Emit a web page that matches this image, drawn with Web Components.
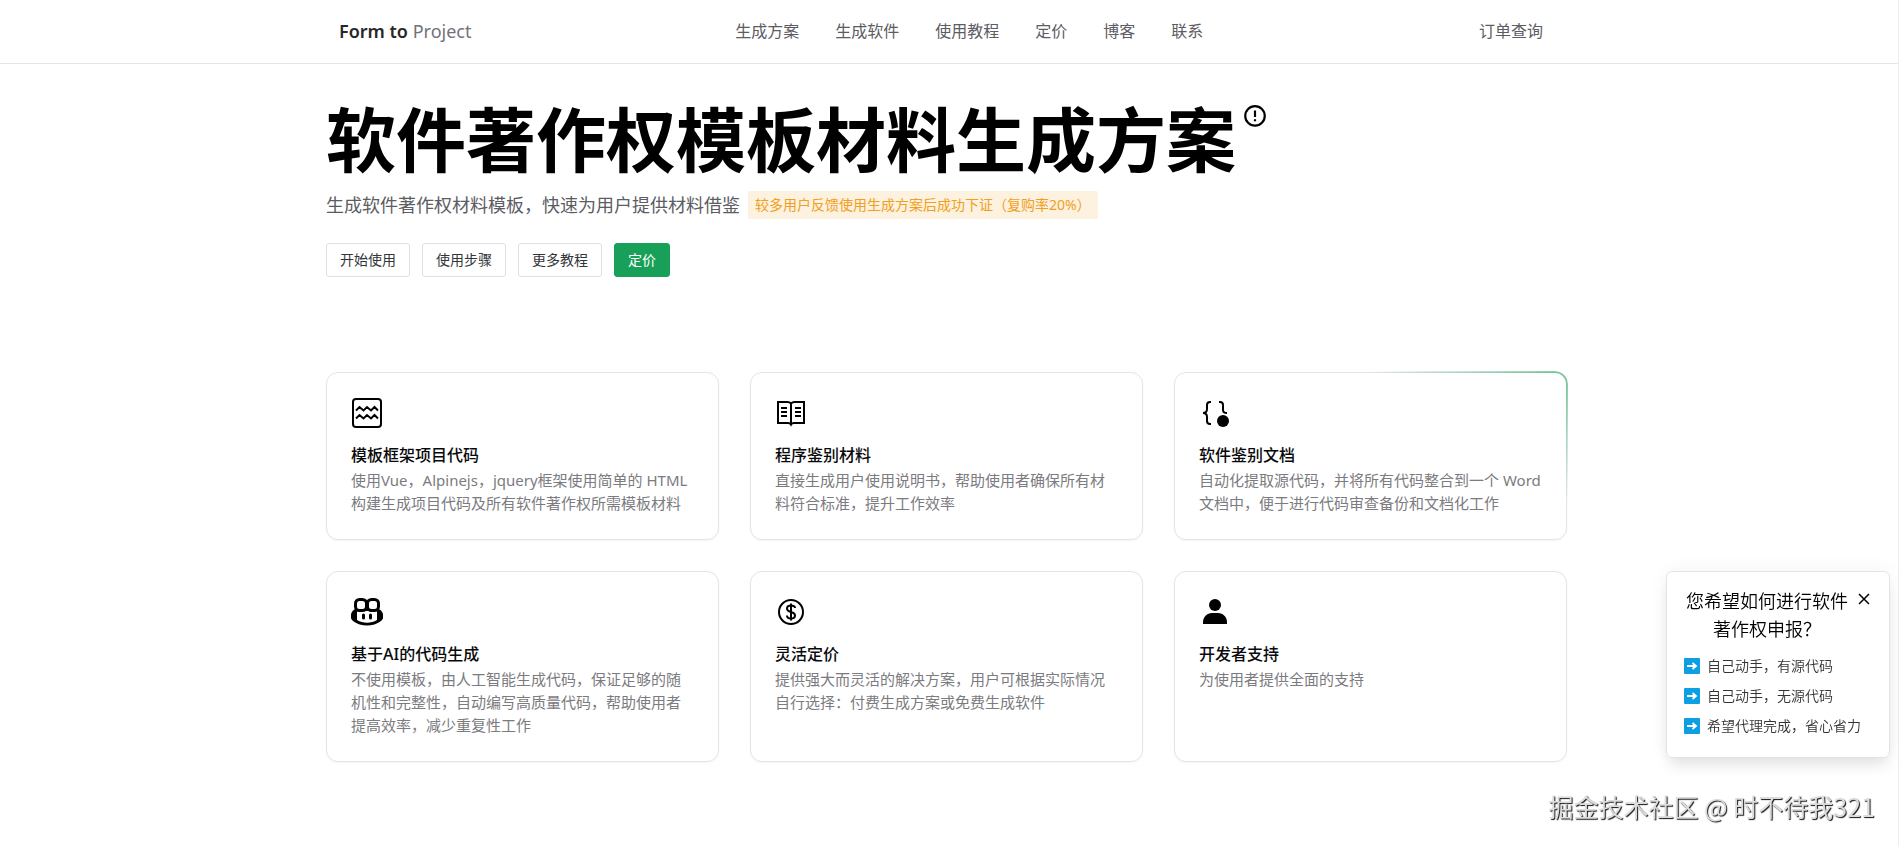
<!DOCTYPE html>
<html lang="zh-CN">
<head>
<meta charset="utf-8">
<title>Form to Project</title>
<style>
    body {
        margin: 0;
        background: #fff;
        color: #000;
        font-family: "Noto Sans", "Noto Sans CJK SC", sans-serif;
    }
</style>
</head>
<body>
<form-app></form-app>

<script>
const icons = {
    waves: `<rect x="2" y="2" width="28" height="28" rx="3" fill="none" stroke="currentColor" stroke-width="2"/>
        <path d="M5 13.5 8.500 10 12.500 13.500 16 10 20 13.500 23.500 10 27 13.500M5 21.500 8.500 18 12.500 21.500 16 18 20 21.500 23.500 18 27 21.500" fill="none" stroke="currentColor" stroke-width="2"/>`,
    book: `<path d="M16 6.500C15 5.500 14 5 12.500 5H3v21h10c1.500 0 2.500.5 3 1.500.5-1 1.500-1.500 3-1.500h10V5h-9.500C18 5 17 5.500 16 6.500zM16 6v21" fill="none" stroke="currentColor" stroke-width="2"/>
        <path d="M6 11h6M6 15h6M6 19h6M20 11h6M20 15h6M20 19h6" stroke="currentColor" stroke-width="2"/>`,
    braces: `<path d="M12 5h-1c-2 0-3 1-3 3v4c0 2-1 4-4 4 3 0 4 2 4 4v4c0 2 1 3 3 3h1M20 5h1c2 0 3 1 3 3v5c0 2 1 3 4 3" fill="none" stroke="currentColor" stroke-width="2"/>
        <circle cx="24" cy="24" r="6" fill="currentColor"/>`,
    copilot: `<path d="M4 13C1 15 0 17 0 19v3c0 1 1 2 2 3 4 3 9 4.500 14 4.500S26 28 30 25c1-1 2-2 2-3v-3c0-2-1-4-4-6z" fill="currentColor"/>
        <path d="M6 15h20v9c-6 3.500-14 3.500-20 0z" fill="#fff"/>
        <rect x="4.500" y="3.500" width="11" height="11" rx="4" fill="#fff" stroke="currentColor" stroke-width="3"/>
        <rect x="16.500" y="3.500" width="11" height="11" rx="4" fill="#fff" stroke="currentColor" stroke-width="3"/>
        <path d="M12.500 19v3M19.500 19v3" stroke="currentColor" stroke-width="3" stroke-linecap="round"/>`,
    dollar: `<circle cx="16" cy="16" r="12" fill="none" stroke="currentColor" stroke-width="2"/>
        <path d="M16 7.500v17M20 12c0-2-2-2.500-4-2.500s-4 .5-4 3c0 2 2 3 4 3.500s4 1.500 4 3.500c0 2.500-2 3-4 3s-4-.5-4-3" fill="none" stroke="currentColor" stroke-width="2"/>`,
    user: `<circle cx="16" cy="9" r="6" fill="currentColor"/>
        <path d="M4 28v-2c0-5 4-9 9-9h6c5 0 9 4 9 9v2z" fill="currentColor"/>`
};

class SiteHeader extends HTMLElement {
    constructor() {
        super();
        this.attachShadow({ mode: 'open' }).innerHTML = `
            <style>
                :host {
                    display: block;
                    padding-right: 4px;
                    border-bottom: 1px solid #e4e4e7;
                }
                .inner {
                    box-sizing: border-box;
                    display: flex;
                    align-items: center;
                    justify-content: space-between;
                    max-width: 1216px;
                    height: 63px;
                    margin: 0 auto;
                    padding-bottom: 2px;
                }
                a {
                    color: #5c5c63;
                    text-decoration: none;
                    font-size: 16px;
                    line-height: 24px;
                }
                .brand {
                    font-size: 18px;
                    color: #71717a;
                }
                .brand b {
                    font-weight: 600;
                    color: #27272a;
                }
                nav {
                    display: flex;
                    gap: 36px;
                }
                .order {
                    padding: 0 12px;
                }
            </style>
            <div class="inner">
                <a class="brand" href="#"><b>Form to</b> Project</a>
                <nav>
                    <a href="#plan">生成方案</a>
                    <a href="#software">生成软件</a>
                    <a href="#guide">使用教程</a>
                    <a href="#price">定价</a>
                    <a href="#blog">博客</a>
                    <a href="#contact">联系</a>
                </nav>
                <a class="order" href="#order">订单查询</a>
            </div>
        `;
    }
}

class UiButton extends HTMLElement {
    constructor() {
        super();
        this.attachShadow({ mode: 'open' }).innerHTML = `
            <style>
                :host {
                    display: block;
                }
                button {
                    display: block;
                    height: 34px;
                    padding: 0 13px;
                    border: 1px solid #e0e0e6;
                    border-radius: 3px;
                    background: #fff;
                    color: #333639;
                    font: inherit;
                    font-size: 14px;
                    line-height: 20px;
                    cursor: pointer;
                }
                :host([primary]) button {
                    border-color: #18a058;
                    background: #18a058;
                    color: #fff;
                }
            </style>
            <button type="button"><slot></slot></button>
        `;
    }
}

class PageHero extends HTMLElement {
    constructor() {
        super();
        this.attachShadow({ mode: 'open' }).innerHTML = `
            <style>
                :host {
                    display: block;
                    padding-top: 40px;
                }
                .title {
                    display: flex;
                    align-items: flex-start;
                    gap: 6px;
                }
                h1 {
                    margin: 0;
                    font-size: 70px;
                    line-height: 72px;
                    font-weight: 700;
                }
                svg {
                    width: 26px;
                    height: 26px;
                }
                .sub {
                    display: flex;
                    align-items: center;
                    gap: 8px;
                    margin-top: 15px;
                    font-size: 18px;
                    line-height: 28px;
                    color: #5c5c63;
                }
                .tag {
                    padding: 0 7px;
                    border-radius: 2px;
                    background: #fdf1df;
                    color: #f0a020;
                    font-size: 14px;
                }
                .actions {
                    display: flex;
                    gap: 12px;
                    margin-top: 24px;
                }
            </style>
            <div class="title">
                <h1>软件著作权模板材料生成方案</h1>
                <svg viewBox="0 0 24 24" fill="none" stroke="currentColor" stroke-width="2">
                    <circle cx="12" cy="11" r="9"/>
                    <path d="M12 6v6M12 14v2"/>
                </svg>
            </div>
            <div class="sub">
                <span>生成软件著作权材料模板，快速为用户提供材料借鉴</span>
                <span class="tag">较多用户反馈使用生成方案后成功下证（复购率20%）</span>
            </div>
            <div class="actions">
                <ui-button>开始使用</ui-button>
                <ui-button>使用步骤</ui-button>
                <ui-button>更多教程</ui-button>
                <ui-button primary>定价</ui-button>
            </div>
        `;
    }
}

class FeatureCard extends HTMLElement {
    constructor() {
        super();
        this.attachShadow({ mode: 'open' }).innerHTML = `
            <style>
                :host {
                    display: block;
                    position: relative;
                    padding: 24px;
                    border: 1px solid #e4e4e7;
                    border-radius: 12px;
                    box-shadow: 0 1px 2px rgba(0, 0, 0, 0.05);
                }
                /* glowing segment of the border */
                :host([glow])::after {
                    content: "";
                    position: absolute;
                    inset: -2px;
                    padding: 2px;
                    border-radius: 13px;
                    background: radial-gradient(200px 130px at 100% 0, rgba(24, 160, 88, 0.55), transparent);
                    mask: linear-gradient(#000 0 0) content-box exclude, linear-gradient(#000 0 0);
                    pointer-events: none;
                }
                svg {
                    display: block;
                    width: 32px;
                    height: 32px;
                    margin-bottom: 14px;
                }
                h3 {
                    margin: 0 0 2px;
                    font-size: 16px;
                    line-height: 24px;
                    font-weight: 500;
                    color: #09090b;
                }
                p {
                    margin: 0;
                    font-size: 15px;
                    line-height: 23px;
                    color: #7b7b80;
                }
            </style>
            <svg viewBox="0 0 32 32"></svg>
            <h3><slot name="title"></slot></h3>
            <p><slot></slot></p>
        `;
    }

    connectedCallback() {
        this.shadowRoot.querySelector('svg').innerHTML = icons[this.getAttribute('icon')];
    }
}

class GuidePopup extends HTMLElement {
    constructor() {
        super();
        this.attachShadow({ mode: 'open' }).innerHTML = `
            <style>
                :host {
                    display: block;
                    position: fixed;
                    right: 9px;
                    bottom: 88px;
                    box-sizing: border-box;
                    width: 224px;
                    padding: 15px 17px 16px;
                    border: 1px solid #e4e4e7;
                    border-radius: 6px;
                    background: #fff;
                    box-shadow: 0 10px 15px -3px rgba(0, 0, 0, 0.1), 0 0 20px rgba(0, 0, 0, 0.05);
                }
                .head {
                    display: flex;
                    align-items: flex-start;
                }
                h2 {
                    flex: 1;
                    margin: 0;
                    text-align: center;
                    font-size: 18px;
                    line-height: 28px;
                    font-weight: 350;
                }
                button {
                    padding: 6px 2px 6px 8px;
                    border: 0;
                    background: none;
                    cursor: pointer;
                }
                svg {
                    display: block;
                }
                ul {
                    margin: 8px 0 0;
                    padding: 0;
                    list-style: none;
                }
                a {
                    display: flex;
                    align-items: center;
                    gap: 7px;
                    font-size: 14px;
                    font-weight: 350;
                    line-height: 30px;
                    color: #333;
                    text-decoration: none;
                }
            </style>
            <div class="head">
                <h2>您希望如何进行软件著作权申报？</h2>
                <button type="button" aria-label="关闭">
                    <svg width="12" height="12" viewBox="0 0 12 12" stroke="#000" stroke-width="1.500"><path d="M1 1l10 10M11 1L1 11"/></svg>
                </button>
            </div>
            <ul></ul>
        `;

        const list = this.shadowRoot.querySelector('ul');
        for (const text of ['自己动手，有源代码', '自己动手，无源代码', '希望代理完成，省心省力']) {
            const item = document.createElement('li');
            item.innerHTML = `
                <a href="#apply">
                    <svg width="16" height="16" viewBox="0 0 16 16"><rect width="16" height="16" rx="1" fill="#0d9fe3"/><path d="M3 8h8M8.500 5l3.500 3-3.500 3" fill="none" stroke="#fff" stroke-width="1.800"/></svg>
                    <span>${text}</span>
                </a>`;
            list.appendChild(item);
        }
    }
}

class PageMark extends HTMLElement {
    constructor() {
        super();
        this.attachShadow({ mode: 'open' }).innerHTML = `
            <style>
                :host {
                    display: block;
                    position: fixed;
                    right: 24px;
                    bottom: 22px;
                    font-family: "Noto Sans CJK SC", sans-serif;
                    font-size: 25px;
                    line-height: 36px;
                    color: #dcdcdc;
                    text-shadow: 1px 1px 1px #111;
                }
            </style>
            <slot></slot>
        `;
    }
}

class FormApp extends HTMLElement {
    constructor() {
        super();
        this.attachShadow({ mode: 'open' }).innerHTML = `
            <style>
                :host {
                    display: block;
                    min-height: 100vh;
                    box-sizing: border-box;
                    border-right: 1px solid #eee;
                }
                main {
                    padding-right: 5px;
                }
                .page {
                    max-width: 1241px;
                    margin: 0 auto;
                }
                .cards {
                    display: grid;
                    grid-template-columns: repeat(3, 1fr);
                    gap: 31px;
                    margin-top: 95px;
                }
            </style>
            <site-header></site-header>
            <main>
                <div class="page">
                    <page-hero></page-hero>
                    <div class="cards">
                        <feature-card icon="waves"><span slot="title">模板框架项目代码</span>使用Vue，Alpinejs，jquery框架使用简单的 HTML 构建生成项目代码及所有软件著作权所需模板材料</feature-card>
                        <feature-card icon="book"><span slot="title">程序鉴别材料</span>直接生成用户使用说明书，帮助使用者确保所有材料符合标准，提升工作效率</feature-card>
                        <feature-card icon="braces" glow><span slot="title">软件鉴别文档</span>自动化提取源代码，并将所有代码整合到一个 Word 文档中，便于进行代码审查备份和文档化工作</feature-card>
                        <feature-card icon="copilot"><span slot="title">基于AI的代码生成</span>不使用模板，由人工智能生成代码，保证足够的随机性和完整性，自动编写高质量代码，帮助使用者提高效率，减少重复性工作</feature-card>
                        <feature-card icon="dollar"><span slot="title">灵活定价</span>提供强大而灵活的解决方案，用户可根据实际情况自行选择：付费生成方案或免费生成软件</feature-card>
                        <feature-card icon="user"><span slot="title">开发者支持</span>为使用者提供全面的支持</feature-card>
                    </div>
                </div>
            </main>
            <guide-popup></guide-popup>
            <page-mark>掘金技术社区 @ 时不待我321</page-mark>
        `;
    }
}

customElements.define('site-header', SiteHeader);
customElements.define('ui-button', UiButton);
customElements.define('page-hero', PageHero);
customElements.define('feature-card', FeatureCard);
customElements.define('guide-popup', GuidePopup);
customElements.define('page-mark', PageMark);
customElements.define('form-app', FormApp);
</script>
</body>
</html>
